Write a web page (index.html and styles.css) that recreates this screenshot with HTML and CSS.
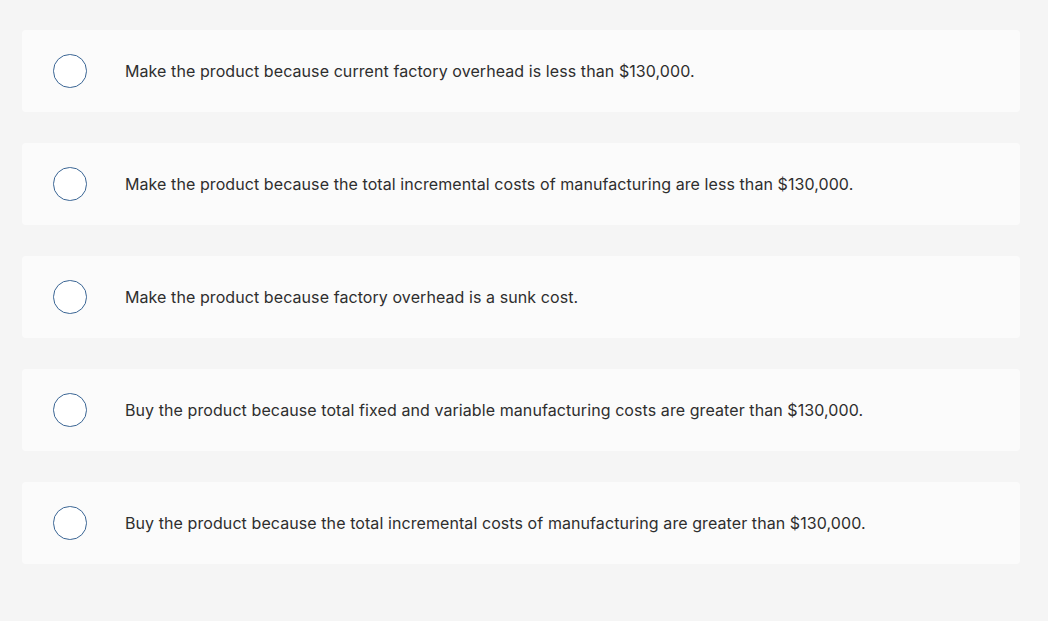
FILE: index.html
```html
<!DOCTYPE html>
<html>
<head>
<meta charset="utf-8">
<link rel="stylesheet" href="styles.css">
</head>
<body>
<div class="list">
  <div class="option"><span class="radio"></span><span class="label">Make the product because current factory overhead is less than $130,000.</span></div>
  <div class="option"><span class="radio"></span><span class="label">Make the product because the total incremental costs of manufacturing are less than $130,000.</span></div>
  <div class="option"><span class="radio"></span><span class="label">Make the product because factory overhead is a sunk cost.</span></div>
  <div class="option"><span class="radio"></span><span class="label">Buy the product because total fixed and variable manufacturing costs are greater than $130,000.</span></div>
  <div class="option"><span class="radio"></span><span class="label">Buy the product because the total incremental costs of manufacturing are greater than $130,000.</span></div>
</div>
</body>
</html>
```
FILE: styles.css
```css
html, body {
  margin: 0;
  padding: 0;
  background: #f5f5f5;
}
body {
  font-family: Inter, Lato, sans-serif;
  color: #2e2e2e;
}
.list {
  display: flex;
  flex-direction: column;
  gap: 31px;
  padding: 30px 28px 0 22px;
}
.option {
  display: flex;
  align-items: center;
  height: 82px;
  background: #fbfbfb;
  border-radius: 4px;
  padding-left: 31px;
  box-sizing: border-box;
}
.radio {
  width: 31.5px;
  height: 31.5px;
  border: 1.6px solid #3a6594;
  border-radius: 50%;
  background: #ffffff;
  flex: none;
}
.label {
  margin-left: 38.5px;
  font-size: 16px;
  line-height: 20px;
  letter-spacing: 0.08px;
}
```
